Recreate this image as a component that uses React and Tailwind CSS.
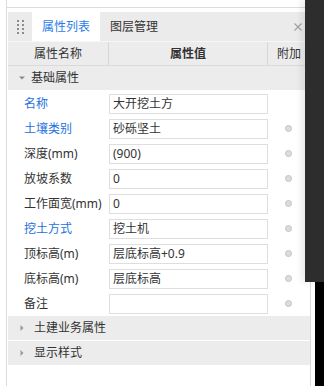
import React from 'react';

const rows = [
    { label: '名称', value: '大开挖土方', blue: true, dot: false },
    { label: '土壤类别', value: '砂砾坚土', blue: true, dot: true },
    { label: '深度(mm)', value: '(900)', dot: true },
    { label: '放坡系数', value: '0', dot: true },
    { label: '工作面宽(mm)', value: '0', dot: true },
    { label: '挖土方式', value: '挖土机', blue: true, dot: true },
    { label: '顶标高(m)', value: '层底标高+0.9', dot: true },
    { label: '底标高(m)', value: '层底标高', dot: true },
    { label: '备注', value: '', dot: true },
];

const Caret = ({ open }) => (
    <svg width="6" height="6" viewBox="0 0 6 6" className="shrink-0">
        {open ? <path d="M0 1.5 L6 1.5 L3 4.5 Z" fill="#8a8a8a" /> : <path d="M1.5 0 L4.5 3 L1.5 6 Z" fill="#9a9a9a" />}
    </svg>
);

const Section = ({ title, open }) => (
    <div className="h-[24px] bg-[#ececec] flex items-center pl-[11px] gap-[6px] text-[#333]">
        <Caret open={open} />
        <span className={open ? '' : 'ml-[3px]'}>{title}</span>
    </div>
);

export default function App() {
    return (
        <div className="relative w-[324px] h-[386px] bg-white overflow-hidden text-[12px] font-['Noto_Sans','Noto_Sans_CJK_SC',sans-serif]">
            <div className="ml-[6px] w-[305px] h-full border-l border-[#dcdcdc] flex flex-col">
                <div className="h-[8px] border-b border-[#dcdcdc] shrink-0" />
                <div className="h-[4px] shrink-0" />

                {/* panel */}
                <div className="ml-[1px] flex-1 border-r border-[#dcdcdc] flex flex-col">
                    {/* tabs */}
                    <div className="h-[29px] bg-[#ebebeb] flex items-stretch shrink-0">
                        <div className="w-[24px] flex items-center justify-center">
                            <div className="grid grid-cols-2 gap-x-[3px] gap-y-[2px]">
                                {Array.from({ length: 8 }).map((_, i) => (
                                    <span key={i} className="w-[2px] h-[2px] bg-[#8c8c8c]" />
                                ))}
                            </div>
                        </div>
                        <div className="w-[68px] bg-white flex items-center justify-center text-[#2b7de9]">属性列表</div>
                        <div className="w-[68px] flex items-center justify-center text-[#333]">图层管理</div>
                        <div className="flex-1 flex items-center justify-end pr-[8px]">
                            <svg width="8" height="8" viewBox="0 0 8 8">
                                <path d="M0.5 0.5 L7.5 7.5 M7.5 0.5 L0.5 7.5" stroke="#a0a0a0" strokeWidth="1.1" />
                            </svg>
                        </div>
                    </div>
                    <div className="h-[1px] bg-[#f6f6f6] shrink-0" />

                    {/* header */}
                    <div className="h-[24px] bg-[#ececec] border-b border-[#dadada] flex text-[#333] shrink-0">
                        <div className="w-[101px] border-r border-[#d6d6d6] flex items-center justify-center">属性名称</div>
                        <div className="w-[159px] border-r border-[#d6d6d6] flex items-center justify-center font-bold">属性值</div>
                        <div className="flex-1 flex items-center pl-[9px]">附加</div>
                    </div>

                    <Section title="基础属性" open />

                    <div className="pt-[1px]">
                        {rows.map((r) => (
                            <div key={r.label} className="h-[25px] flex items-center">
                                <div className={`w-[101px] pl-[16px] whitespace-nowrap ${r.blue ? 'text-[#2470e0]' : 'text-[#333]'}`}>
                                    {r.label}
                                </div>
                                <div className="w-[159px] h-[20px] border border-[#dedede] bg-white flex items-center pl-[3px] text-[#333] whitespace-nowrap">
                                    {r.value}
                                </div>
                                <div className="flex-1 flex items-center justify-center pr-[2px]">
                                    {r.dot && <span className="w-[7px] h-[7px] rounded-full bg-[#dcdcdc] border border-[#c4c4c4]" />}
                                </div>
                            </div>
                        ))}
                    </div>

                    <Section title="土建业务属性" />
                    <div className="h-[1px] bg-white" />
                    <Section title="显示样式" />
                </div>
            </div>

            <div className="absolute right-0 top-0 w-[19px] h-[282px] bg-[#2d2d2d] shadow-[-4px_0_6px_rgba(0,0,0,0.08)]" />
            <div className="absolute right-0 top-[282px] bottom-0 w-[9px] bg-black" />
        </div>
    );
}
